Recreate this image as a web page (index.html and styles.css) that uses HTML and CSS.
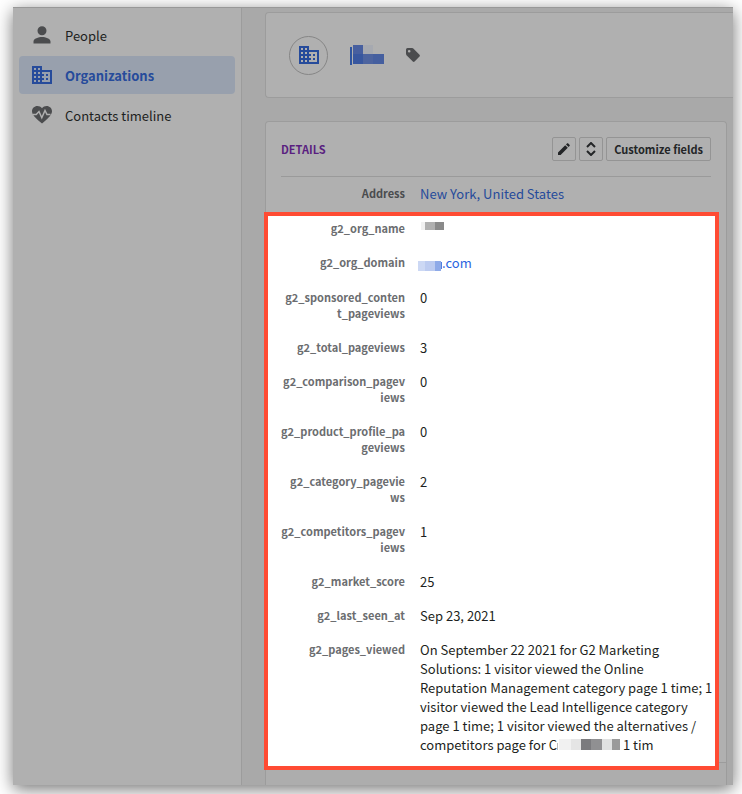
FILE: index.html
```html
<!DOCTYPE html>
<html lang="en">
<head>
<meta charset="utf-8">
<meta name="viewport" content="width=device-width, initial-scale=1">
<title>Organizations</title>
<link rel="stylesheet" href="styles.css">
</head>
<body>
<svg class="defs" aria-hidden="true">
  <symbol id="building" viewBox="0 0 20 18">
    <path fill="currentColor" fill-rule="evenodd" d="M0 0h10v4h10v14H0zM2 2v2h2V2zm4 0v2h2V2zM2 6v2h2V6zm4 0v2h2V6zM2 10v2h2v-2zm4 0v2h2v-2zM2 14v2h2v-2zm4 0v2h2v-2zM10 6v2h2v2h-2v2h2v2h-2v2h8V6zM14 8h2v2h-2zM14 12h2v2h-2z"/>
  </symbol>
</svg>
<div class="window">
  <nav class="sidebar">
    <a class="nav-item" href="#people">
      <svg class="icon" viewBox="0 0 20 20"><path fill="currentColor" d="M10 1.200a4.500 4.500 0 1 1 0 9a4.500 4.500 0 0 1 0-9zM1.500 18.500v-2c0-3 5-4.600 8.500-4.600s8.500 1.600 8.500 4.600v2z"/></svg>
      People
    </a>
    <a class="nav-item active" href="#organizations" aria-current="page">
      <svg class="icon building"><use href="#building"/></svg>
      Organizations
    </a>
    <a class="nav-item" href="#timeline">
      <svg class="icon" viewBox="0 0 20 20"><path fill="currentColor" d="M10 18.500L8.500 17.200C3.500 12.700 0 9.800 0 6.200C0 3.300 2.400 1 5.400 1C7.200 1 8.900 1.900 10 3.200C11.100 1.900 12.800 1 14.600 1C17.600 1 20 3.300 20 6.200C20 9.800 16.500 12.700 11.500 17.200z"/><path class="pulse" d="M1 9.500h3.200L7 6.500l2.800 6.200L13 5.500l2 4h3.500"/></svg>
      Contacts timeline
    </a>
  </nav>
  <main class="content">
    <header class="org-card">
      <span class="avatar"><svg class="building"><use href="#building"/></svg></span>
      <svg class="org-name" viewBox="0 0 34 20" role="img" aria-label="Organization name hidden">
        <path fill="#2f559f" d="M0 2h2v18H0z"/><path fill="#475f9f" d="M3 0h10v9H3z"/><path fill="#a6a9b0" d="M13 0h10v9H13z"/>
        <path fill="#38579f" d="M3 9h10v10H3z"/><path fill="#4d649f" d="M13 9h10v10H13z"/><path fill="#455f9f" d="M23 9h11v10H23z"/>
      </svg>
      <svg class="tag" viewBox="0 0 14 14"><path fill="currentColor" fill-rule="evenodd" d="M1.500 0H6.200L7.300.500L13.500 6.800Q14.300 7.700 13.500 8.500L8.600 13.500Q7.700 14.300 6.800 13.500L.5 7.200L0 6V1.500Q0 0 1.500 0zM3.200 1.900a1.300 1.300 0 1 0 0 2.600a1.300 1.300 0 0 0 0-2.600z"/></svg>
    </header>
    <div class="panels">
      <section class="panel">
        <div class="panel-head">
          <h2>DETAILS</h2>
          <button class="btn square" type="button" aria-label="Edit"><svg viewBox="0 0 12 12"><path fill="currentColor" d="M0 12v-2.600L7.200 2.200l2.600 2.600L2.600 12zM8 1.400L9.200.3Q9.600 0 10 .3L11.700 2Q12 2.400 11.700 2.800L10.600 4z"/></svg></button>
          <button class="btn square" type="button" aria-label="Reorder"><svg class="sort" viewBox="0 0 10 14"><path d="M1 5l4-4 4 4M1 9l4 4 4-4"/></svg></button>
          <button class="btn" type="button">Customize fields</button>
        </div>
        <dl class="fields">
          <div class="row linked dimmed"><dt>Address</dt><dd><a href="#address">New York, United States</a></dd></div>
        </dl>
        <dl class="fields highlight">
          <div class="row"><dt>g2_org_name</dt><dd><svg class="mask-name" viewBox="0 0 24 8" role="img" aria-label="Hidden"><path fill="#f1f1f1" d="M1 0h4v8H1z"/><path fill="#b0b0b0" d="M5 0h10v8H5z"/><path fill="#8a8a8a" d="M15 0h9v8h-9z"/></svg></dd></div>
          <div class="row linked"><dt>g2_org_domain</dt><dd><a href="#domain"><svg class="mask-domain" viewBox="0 0 24 10" role="img" aria-label="Hidden"><path fill="#ccd8f4" d="M0 0h7v10H0z"/><path fill="#bccbf0" d="M7 0h10v10H7z"/><path fill="#8eaae8" d="M17 0h6v10h-6z"/><path fill="#4f7fe0" d="M23 1h1v7h-1z"/></svg>.com</a></dd></div>
          <div class="row"><dt>g2_sponsored_conten<wbr>t_pageviews</dt><dd>0</dd></div>
          <div class="row"><dt>g2_total_pageviews</dt><dd>3</dd></div>
          <div class="row"><dt>g2_comparison_pagev<wbr>iews</dt><dd>0</dd></div>
          <div class="row"><dt>g2_product_profile_pa<wbr>geviews</dt><dd>0</dd></div>
          <div class="row"><dt>g2_category_pagevie<wbr>ws</dt><dd>2</dd></div>
          <div class="row"><dt>g2_competitors_pagev<wbr>iews</dt><dd>1</dd></div>
          <div class="row"><dt>g2_market_score</dt><dd>25</dd></div>
          <div class="row"><dt>g2_last_seen_at</dt><dd>Sep 23, 2021</dd></div>
          <div class="row"><dt>g2_pages_viewed</dt><dd>On September 22 2021 for G2 Marketing Solutions: 1 visitor viewed the Online Reputation Management category page 1 time; 1 visitor viewed the Lead Intelligence category page 1 time; 1 visitor viewed the alternatives / competitors page for C<svg class="mask-page" viewBox="0 0 63 11" role="img" aria-label="Hidden"><path fill="#bbb" d="M0 4h1v7H0z"/><path fill="#f1f1f1" d="M2 0h12v11H2z"/><path fill="#e5e5e5" d="M14 0h10v11H14z"/><path fill="#7b7b7e" d="M24 0h10v11H24z"/><path fill="#909092" d="M34 0h11v11H34z"/><path fill="#e0e1e1" d="M45 0h10v11H45z"/><path fill="#9a9a9a" d="M55 0h8v11h-8z"/></svg> 1 tim</dd></div>
        </dl>
      </section>
    </div>
  </main>
</div>
</body>
</html>
```
FILE: styles.css
```css
* { box-sizing: border-box; }

body {
  margin: 0;
  min-height: 100vh;
  padding: 7px 9px 9px 13px;
  display: flex;
  background: #fff;
  color: #1d1f21;
  font: 13px/19px "Noto Sans CJK SC", "Noto Sans", sans-serif;
}

a { color: inherit; text-decoration: none; }
svg { flex: none; }
.defs { position: absolute; width: 0; height: 0; }

.window {
  flex: 1;
  display: flex;
  background: #a9a9a9;
  border-top: 1px solid #989898;
  box-shadow: 0 4px 16px rgba(0, 0, 0, .55);
}

.sidebar {
  width: 229px;
  padding: 8px 6px;
  display: flex;
  flex-direction: column;
  gap: 2px;
  background: #b0b0b0;
  border-right: 1px solid #9c9c9c;
}

.nav-item {
  height: 38px;
  padding: 0 13px;
  display: flex;
  align-items: center;
  gap: 13px;
  border-radius: 4px;
}
.nav-item.active { background: #98a0ad; color: #264b9b; font-weight: 700; }
.icon { width: 20px; height: 20px; color: #4b4c4e; }
.building { width: 20px; height: 18px; color: #264b9b; }
.pulse { fill: none; stroke: #b0b0b0; stroke-width: 1.5; }

.content {
  flex: 1;
  min-width: 0;
  padding: 4px 0 0 23px;
  display: flex;
  flex-direction: column;
}

.org-card {
  height: 86px;
  padding: 0 23px;
  display: flex;
  align-items: center;
  background: #b0b0b0;
  border: 1px solid #9c9c9c;
  border-right: 0;
  border-radius: 4px 0 0 4px;
}
.avatar {
  width: 39px;
  height: 39px;
  display: flex;
  align-items: center;
  justify-content: center;
  border: 1px solid #868686;
  border-radius: 50%;
}
.org-name { width: 34px; height: 20px; margin: 0 22px; }
.tag { width: 14px; height: 14px; color: #4b4c4e; }

.panels {
  flex: 1;
  margin: 23px 6px 0 0;
  background: #adadad;
  border: 1px solid #9c9c9c;
  border-bottom: 0;
  border-radius: 4px 4px 0 0;
}
.panel {
  padding: 15px 7px 0 0;
  background: #b0b0b0;
  border-bottom: 1px solid #9c9c9c;
  border-radius: 4px 4px 0 0;
}
.panel-head {
  margin: 0 8px 0 15px;
  padding-bottom: 15px;
  display: flex;
  align-items: center;
  gap: 3px;
  border-bottom: 1px solid #9a9a9a;
}
.panel-head h2 {
  flex: 1;
  margin: 0;
  color: #5a1f80;
  font-size: 11px;
  line-height: 16px;
}

.btn {
  height: 24px;
  padding: 0 7px;
  display: flex;
  align-items: center;
  justify-content: center;
  border: 1px solid #949494;
  border-radius: 2px;
  background: #b0b0b0;
  color: #232527;
  font: 700 11px/16px "Noto Sans CJK SC", "Noto Sans", sans-serif;
}
.btn.square { width: 24px; padding: 0; }
.btn svg { width: 12px; height: 12px; }
.btn .sort {
  width: 10px;
  height: 14px;
  fill: none;
  stroke: currentColor;
  stroke-width: 2;
}

.fields { margin: 0; }
.row {
  padding: 7px 2px 8px 15px;
  display: flex;
  gap: 15px;
}
.row.linked { padding-bottom: 9px; }
.row dt {
  width: 124px;
  padding: 1px 0 2px;
  color: #6b6d70;
  font-size: 11px;
  font-weight: 700;
  line-height: 16px;
  text-align: right;
}
.row dd { flex: 1; min-width: 0; margin: 0; }
.row a { color: #2b64e0; }
.dimmed dt { color: #4a4c4e; }
.row.dimmed a { color: #264b9b; }

.highlight {
  position: relative;
  margin: 0 0 -8px -2px;
  padding: 0 4px 8px 2px;
  background: #fff;
  box-shadow: inset 0 0 0 4px #ff4b33;
}
.mask-name { width: 24px; height: 8px; vertical-align: 4px; }
.mask-domain { width: 24px; height: 10px; margin-left: -2px; vertical-align: -3px; }
.mask-page { width: 63px; height: 11px; }
```
